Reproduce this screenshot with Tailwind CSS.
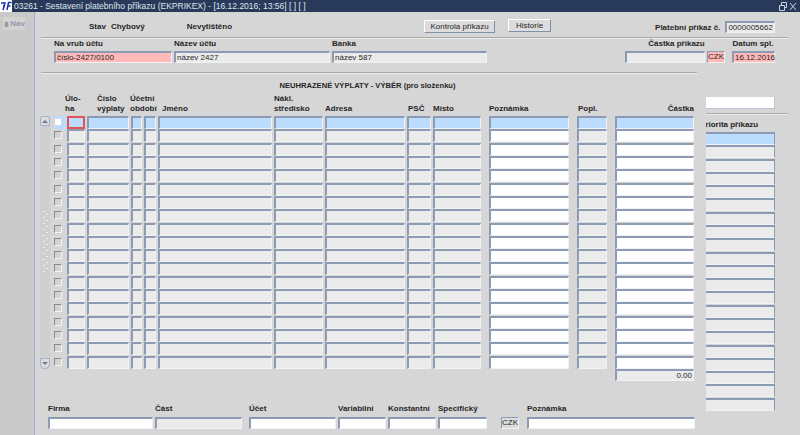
<!DOCTYPE html>
<html lang="en">
<head>
  <meta charset="UTF-8">
  <title>Sestavení platebního příkazu</title>
  <script src="https://cdn.jsdelivr.net/npm/@tailwindcss/browser@4"></script>
</head>
<body class="w-[800px] h-[435px] overflow-hidden flex flex-col bg-[#d6d6d6] text-[#262626] text-[8px] font-['Liberation_Sans',Arial,sans-serif]">

  <!-- Title bar -->
  <div class="h-[12px] shrink-0 flex items-center bg-[#29395a] text-[#dfe5ee]">
    <svg class="w-[12px] h-[12px] shrink-0 bg-white" viewBox="0 0 12 12" fill="none" stroke="#1a2fb0" stroke-width="1.5">
      <path d="M1 3H5L3 10M3 6H5M7 10L8.5 2.5H11.5M7.8 6H10.5"/>
    </svg>
    <span class="ml-[2px] text-[8.5px] leading-none whitespace-nowrap">03261 - Sestavení platebního příkazu (EKPRIKEX) - [16.12.2016; 13:56] [ ] [ ]</span>
    <svg class="ml-auto mr-[3px] w-[18px] h-[9px]" viewBox="0 0 18 9" fill="none" stroke="#c9d2df" stroke-width="1">
      <path d="M0.5 3.5H5.5V8.5H0.5ZM2.5 3V0.5H7.5V5.5H6M11 1L17 8M17 1L11 8"/>
    </svg>
  </div>

  <div class="flex-1 flex min-h-0">
    <!-- Navigator rail -->
    <div class="w-[34px] shrink-0 bg-[#c9c9c9] pt-[5px]">
      <div class="ml-[3px] w-[22px] h-[13px] pt-[1px] flex items-center gap-[1px] bg-[#d3d3d3] text-[#8f9cb0] font-bold">
        <span class="w-[7px] h-[7px] ml-[1px] rounded-[2px] bg-[#9a9a9a] border border-[#c4c4c4]"></span>Nav
      </div>
    </div>

    <main class="flex-1 border-l border-[#9fb2ca] min-w-0">
      <!-- Status row -->
      <div class="h-[25px] flex font-bold">
        <span class="ml-[54px] mt-[9px]">Stav</span>
        <span class="ml-[5px] mt-[9px]">Chybový</span>
        <span class="ml-[42px] mt-[9px]">Nevytištěno</span>
        <button class="ml-[192px] mt-[8px] w-[71px] h-[13px] bg-[#dcdcdc] font-normal border border-t-white border-l-white border-r-[#7f90ab] border-b-[#7f90ab]">Kontrola příkazu</button>
        <button class="ml-[13px] mt-[7px] w-[43px] h-[13px] bg-[#dcdcdc] font-normal border border-t-white border-l-white border-r-[#7f90ab] border-b-[#7f90ab]">Historie</button>
        <span class="ml-[104px] mt-[10px] whitespace-nowrap">Platební příkaz č.</span>
        <div class="ml-[5px] mt-[9px] w-[50px] h-[12px] pl-[1px] leading-[10px] font-normal bg-[#ebebeb] border-t-2 border-l-2 border-t-[#8b9bb4] border-l-[#8b9bb4] border-r border-b border-r-[#f2f2f2] border-b-[#f2f2f2]">0000005662</div>
      </div>
      <div class="ml-[6px] w-[747px] h-[2px] bg-[#a9a9a9] border-b border-[#ececec]"></div>

      <!-- Account labels and fields -->
      <div class="h-[12px] flex font-bold leading-[9px]">
        <span class="ml-[19px] w-[120px]">Na vrub účtu</span>
        <span class="w-[158px]">Název účtu</span>
        <span class="w-[297px]">Banka</span>
        <span class="w-[95px] text-center">Částka příkazu</span>
        <span class="w-[58px] text-center">Datum spl.</span>
      </div>
      <div class="h-[12px] flex leading-[10px]">
        <div class="ml-[19px] w-[118px] pl-[1px] bg-[#ffb9b9] border-t-2 border-l-2 border-t-[#8b9bb4] border-l-[#8b9bb4] border-r border-b border-r-[#f2f2f2] border-b-[#f2f2f2]">číslo-2427/0100</div>
        <div class="ml-[2px] w-[156px] pl-[1px] bg-[#ebebeb] border-t-2 border-l-2 border-t-[#8b9bb4] border-l-[#8b9bb4] border-r border-b border-r-[#f2f2f2] border-b-[#f2f2f2]">název 2427</div>
        <div class="ml-[2px] w-[155px] pl-[1px] bg-[#ebebeb] border-t-2 border-l-2 border-t-[#8b9bb4] border-l-[#8b9bb4] border-r border-b border-r-[#f2f2f2] border-b-[#f2f2f2]">název 587</div>
        <div class="ml-[138px] w-[80px] bg-[#ebebeb] border-t-2 border-l-2 border-t-[#8b9bb4] border-l-[#8b9bb4] border-r border-b border-r-[#f2f2f2] border-b-[#f2f2f2]"></div>
        <div class="ml-[2px] w-[18px] text-center bg-[#ffb9b9] border-t border-l border-t-[#8b9bb4] border-l-[#8b9bb4] border-r border-b border-r-[#f2f2f2] border-b-[#f2f2f2]">CZK</div>
        <div class="ml-[7px] w-[43px] pl-[1px] bg-[#ffb9b9] border-t-2 border-l-2 border-t-[#8b9bb4] border-l-[#8b9bb4] border-r border-b border-r-[#f2f2f2] border-b-[#f2f2f2]">16.12.2016</div>
      </div>
      <div class="h-[9px]"></div>
      <div class="ml-[6px] w-[656px] h-[2px] bg-[#a9a9a9] border-b border-[#ececec]"></div>

      <div class="flex">
        <!-- Payments block, its canvas lies over the left edge of the order side -->
        <section class="relative z-10 w-[671px] shrink-0 bg-[#d6d6d6]">
          <h1 class="w-[665px] h-[18px] pt-[7px] leading-[9px] text-center text-[7.6px] font-bold">NEUHRAZENÉ VÝPLATY - VÝBĚR (pro složenku)</h1>
          <div class="h-[24px] pb-[2px] pl-[30px] flex items-end font-bold leading-[10px]">
            <span class="w-[32px]">Úlo-<br>ha</span>
            <span class="w-[33px]">Číslo<br>výplaty</span>
            <span class="w-[32px]">Účetní<br>období</span>
            <span class="w-[112px]">Jméno</span>
            <span class="w-[51px]">Nákl.<br>středisko</span>
            <span class="w-[83px]">Adresa</span>
            <span class="w-[25px]">PSČ</span>
            <span class="w-[56px]">Místo</span>
            <span class="w-[89px]">Poznámka</span>
            <span class="w-[37px]">Popl.</span>
            <span class="w-[79px] text-right">Částka</span>
          </div>

          <div class="flex h-[253px]">
            <!-- Scrollbar -->
            <div class="ml-[5px] w-[10px] flex flex-col bg-[#cfcfcf]">
              <div class="h-[10px] flex items-center justify-center rounded-t-[3px] bg-[#dcdcdc] border border-[#9fb2ca]">
                <span class="border-x-[3px] border-x-transparent border-b-[3px] border-b-[#6b7b96]"></span>
              </div>
              <div class="flex-1 flex items-center">
                <svg class="w-[10px] h-[62px]" viewBox="0 0 10 62">
                  <defs>
                    <pattern id="grip" width="6" height="6" patternUnits="userSpaceOnUse">
                      <rect x="3" y="0" width="2" height="1" fill="#f1f1f1"/>
                      <rect x="0" y="3" width="2" height="1" fill="#f1f1f1"/>
                    </pattern>
                  </defs>
                  <rect x="3" width="6" height="62" fill="url(#grip)"/>
                </svg>
              </div>
              <div class="h-[11px] flex items-center justify-center rounded-b-[5px] bg-[#dcdcdc] border border-[#9fb2ca]">
                <span class="border-x-[3px] border-x-transparent border-t-[3px] border-t-[#6b7b96]"></span>
              </div>
            </div>
            <div id="rows" class="ml-[4px] flex-1 grid grid-rows-[repeat(19,1fr)]"></div>
          </div>

          <!-- Sum -->
          <div class="h-[12px] flex justify-end pr-[12px]">
            <div class="w-[79px] pr-[1px] text-right leading-[10px] bg-[#ebebeb] border-t-2 border-l-2 border-t-[#8b9bb4] border-l-[#8b9bb4] border-r border-b border-r-[#f2f2f2] border-b-[#f2f2f2]">0.00</div>
          </div>

          <!-- Bottom form -->
          <div class="mt-[23px] h-[13px] flex font-bold leading-[10px]">
            <span class="ml-[13px] w-[107px]">Firma</span>
            <span class="w-[94px]">Část</span>
            <span class="w-[89px]">Účet</span>
            <span class="w-[50px]">Variabilní</span>
            <span class="w-[50px]">Konstantní</span>
            <span class="w-[63px]">Specifický</span>
            <span class="w-[100px] ml-[26px]">Poznámka</span>
          </div>
          <div class="h-[12px] flex leading-[10px]">
            <div class="ml-[13px] w-[105px] bg-white border-t-2 border-l-2 border-t-[#8b9bb4] border-l-[#8b9bb4] border-r border-b border-r-[#f2f2f2] border-b-[#f2f2f2]"></div>
            <div class="ml-[2px] w-[87px] bg-[#ebebeb] border-t-2 border-l-2 border-t-[#8b9bb4] border-l-[#8b9bb4] border-r border-b border-r-[#f2f2f2] border-b-[#f2f2f2]"></div>
            <div class="ml-[7px] w-[87px] bg-white border-t-2 border-l-2 border-t-[#8b9bb4] border-l-[#8b9bb4] border-r border-b border-r-[#f2f2f2] border-b-[#f2f2f2]"></div>
            <div class="ml-[2px] w-[48px] bg-white border-t-2 border-l-2 border-t-[#8b9bb4] border-l-[#8b9bb4] border-r border-b border-r-[#f2f2f2] border-b-[#f2f2f2]"></div>
            <div class="ml-[2px] w-[48px] bg-white border-t-2 border-l-2 border-t-[#8b9bb4] border-l-[#8b9bb4] border-r border-b border-r-[#f2f2f2] border-b-[#f2f2f2]"></div>
            <div class="ml-[2px] w-[49px] bg-white border-t-2 border-l-2 border-t-[#8b9bb4] border-l-[#8b9bb4] border-r border-b border-r-[#f2f2f2] border-b-[#f2f2f2]"></div>
            <div class="ml-[14px] w-[18px] text-center bg-[#dcdcdc] border-t border-l border-t-[#8b9bb4] border-l-[#8b9bb4] border-r border-b border-r-[#f2f2f2] border-b-[#f2f2f2]">CZK</div>
            <div class="ml-[8px] w-[168px] bg-white border-t-2 border-l-2 border-t-[#8b9bb4] border-l-[#8b9bb4] border-r border-b border-r-[#f2f2f2] border-b-[#f2f2f2]"></div>
          </div>
        </section>

        <!-- Order side -->
        <aside class="flex-1 pt-[23px]">
          <div class="w-[69px] h-[12px] bg-white border-r border-b border-r-[#b9c4d4] border-b-[#b9c4d4]"></div>
          <div class="mt-[4px] w-[82px] h-[2px] bg-[#a9a9a9] border-b border-[#ececec]"></div>
          <div class="h-[17px] pt-[5px] -ml-[6px] font-bold leading-[9px] whitespace-nowrap">Priorita příkazu</div>
          <div id="side" class="w-[69px] h-[279px] grid grid-rows-[repeat(21,1fr)]"></div>
        </aside>
      </div>
    </main>
  </div>

<script>
  // payment grid columns: width, left margin, fill for the normal rows
  const cols = [
    ['w-[18px]', 'ml-[0px]', 'bg-[#ebebeb]'],
    ['w-[42px]', 'ml-[2px]', 'bg-[#ebebeb]'],
    ['w-[11px]', 'ml-[2px]', 'bg-[#ebebeb]'],
    ['w-[12px]', 'ml-[2px]', 'bg-[#ebebeb]'],
    ['w-[114px]', 'ml-[2px]', 'bg-[#ebebeb]'],
    ['w-[49px]', 'ml-[2px]', 'bg-[#ebebeb]'],
    ['w-[80px]', 'ml-[2px]', 'bg-[#ebebeb]'],
    ['w-[24px]', 'ml-[2px]', 'bg-[#ebebeb]'],
    ['w-[48px]', 'ml-[2px]', 'bg-[#ebebeb]'],
    ['w-[80px]', 'ml-[8px]', 'bg-white'],
    ['w-[30px]', 'ml-[8px]', 'bg-[#ebebeb]'],
    ['w-[79px]', 'ml-[8px]', 'bg-white']
  ];
  const field = 'h-[13px] border-t-2 border-l-2 border-t-[#8b9bb4] border-l-[#8b9bb4] border-r border-b border-r-[#f2f2f2] border-b-[#f2f2f2]';
  const current = 'h-[13px] border-2 border-[#e05555]';

  let rows = '';
  for (let i = 0; i < 19; i++) {
    const box = i === 0
      ? 'bg-white border border-[#cfd8e4]'
      : 'bg-[#d2d2d2] border border-t-[#8a8a8a] border-l-[#8a8a8a] border-r-[#f4f4f4] border-b-[#f4f4f4]';
    rows += `<div class="flex"><div class="w-[13px] h-[13px] flex items-start ${i === 0 ? 'bg-[#bcdcfd]' : ''}"><span class="block mt-[2px] w-[8px] h-[8px] ${box}"></span></div>`;
    cols.forEach((c, n) => {
      const fill = i === 0 ? 'bg-[#bcdcfd]' : c[2];
      const look = i === 0 && n === 0 ? current : field;
      rows += `<div class="${c[0]} ${c[1]} ${fill} ${look}"></div>`;
    });
    rows += '</div>';
  }
  document.getElementById('rows').innerHTML = rows;

  let side = '';
  for (let i = 0; i < 21; i++) {
    const fill = i === 0 ? 'bg-[#bcdcfd]' : 'bg-[#ebebeb]';
    side += `<div class="h-[13px] ${fill} border-t-2 border-t-[#8b9bb4] border-r border-r-[#8b9bb4] border-b border-b-[#f2f2f2]"></div>`;
  }
  document.getElementById('side').innerHTML = side;
</script>
</body>
</html>
